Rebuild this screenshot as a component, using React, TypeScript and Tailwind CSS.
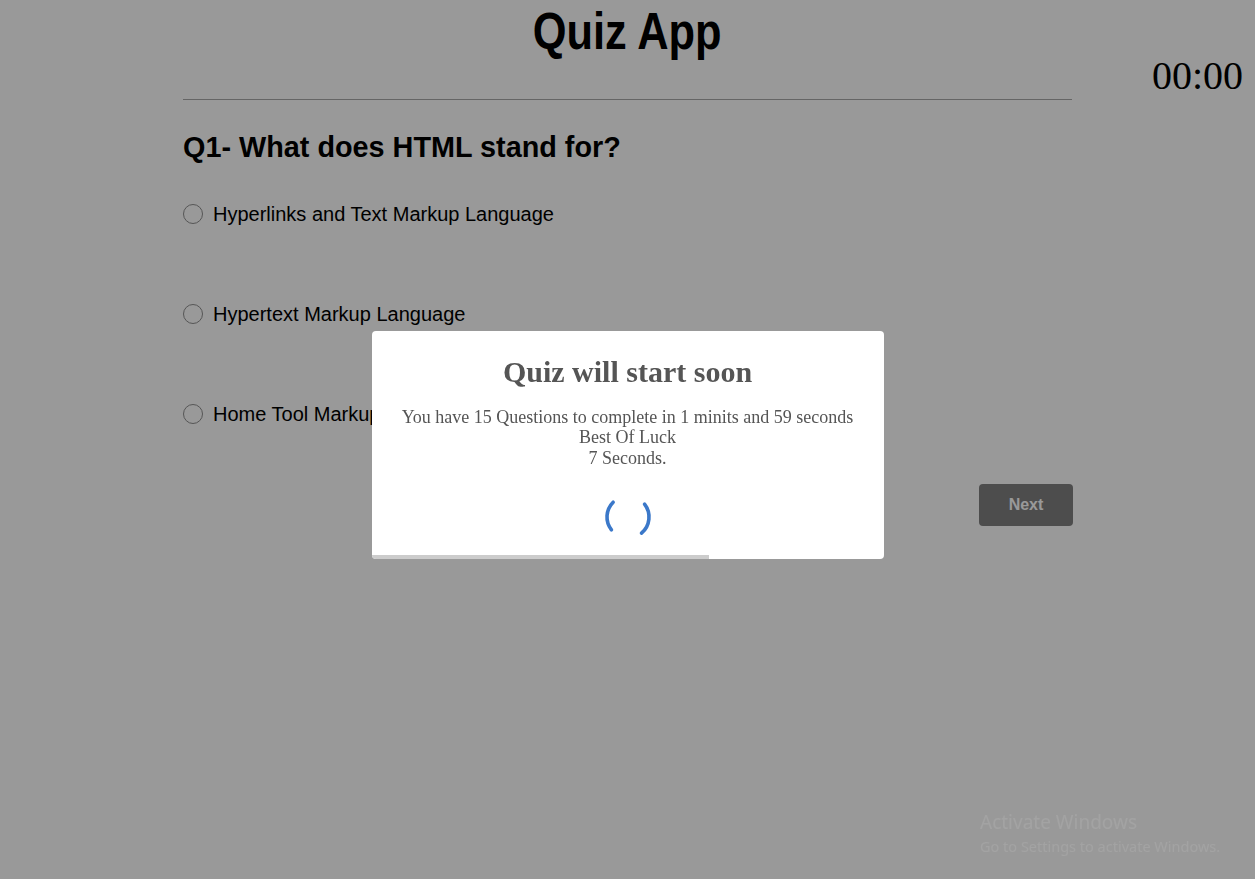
import React from 'react';

const OPTIONS = [
  'Hyperlinks and Text Markup Language',
  'Hypertext Markup Language',
  'Home Tool Markup Language',
];

const Spinner: React.FC = () => (
  <svg width="48" height="48" viewBox="0 0 48 48" fill="none">
    <path d="M 7.45 36.93 A 21 21 0 0 1 9.15 9.15" stroke="#3b78c9" strokeWidth="3.6" strokeLinecap="round" />
    <path d="M 40.55 11.07 A 21 21 0 0 1 37.5 40.09" stroke="#3b78c9" strokeWidth="3.6" strokeLinecap="round" />
  </svg>
);

const App: React.FC = () => {
  return (
    <div className="relative min-h-screen bg-white font-['Liberation_Sans',Arial,sans-serif] text-black overflow-hidden">
      {/* quiz page */}
      <div className="w-[889px] mx-auto">
        <h1 className="pt-[5px] text-center text-[52px] leading-none font-bold">
          <span className="inline-block scale-x-[0.835]">Quiz App</span>
        </h1>
        <div className="mt-[42px] border-t border-[#a8a8a8]"></div>

        <h2 className="mt-[33px] text-[28.8px] leading-none font-bold">Q1- What does HTML stand for?</h2>

        <div className="mt-[2px] flex flex-col">
          {OPTIONS.map((opt) => (
            <label key={opt} className="h-[100px] flex items-center gap-[10px] text-[20px]">
              <span className="w-[20px] h-[20px] rounded-full border border-[#8f8f8f] bg-white shrink-0"></span>
              <span>{opt}</span>
            </label>
          ))}
        </div>

        <div className="mt-[20px] flex justify-end -mr-[1px]">
          <button className="w-[94px] h-[42px] rounded-[4px] bg-[#808080] text-white text-[16px] font-bold">Next</button>
        </div>
      </div>

      <div className="absolute right-[12px] top-[56px] text-[40px] leading-none font-['Liberation_Serif','Times_New_Roman',serif]">
        00:00
      </div>

      {/* overlay */}
      <div className="fixed inset-0 bg-black/40"></div>

      {/* start modal */}
      <div className="absolute top-[331px] left-1/2 -translate-x-1/2 w-[512px] bg-white rounded-[4px] overflow-hidden font-['Liberation_Serif','Times_New_Roman',serif] text-[#555555] text-center">
        <h3 className="pt-[24px] text-[30px] font-bold leading-[1.15]">Quiz will start soon</h3>
        <p className="mt-[17px] text-[18px] leading-[1.15]">
          You have 15 Questions to complete in 1 minits and 59 seconds
          <br />
          Best Of Luck
          <br />
          7 Seconds.
        </p>
        <div className="mt-[24px] flex justify-center">
          <Spinner />
        </div>
        <div className="mt-[14px] h-[4px] w-[66%] bg-[#cccccc]"></div>
      </div>

      {/* windows watermark */}
      <div className="fixed left-[980px] top-[811px] text-[#a3a3a3] font-['Noto_Sans','Open_Sans',sans-serif] leading-tight">
        <div className="text-[19px]">Activate Windows</div>
        <div className="text-[14.5px] mt-[2px]">Go to Settings to activate Windows.</div>
      </div>
    </div>
  );
};

export default App;
